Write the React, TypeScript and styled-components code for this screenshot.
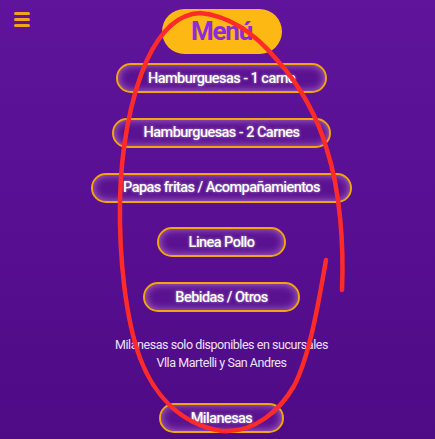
import styled, { createGlobalStyle } from 'styled-components';

const items = [
  'Hamburguesas - 1 carne',
  'Hamburguesas - 2 Carnes',
  'Papas fritas / Acompañamientos',
  'Linea Pollo',
  'Bebidas / Otros',
];

const GlobalStyle = createGlobalStyle`
  html, body {
    margin: 0;
    padding: 0;
  }

  body {
    width: 435px;
    height: 439px;
    overflow: hidden;
    background: linear-gradient(180deg, #5f149b 0%, #580f92 50%, #4e0b85 100%);
    font-family: Roboto, 'Liberation Sans', sans-serif;
  }
`;

const Page = styled.main`
  position: relative;
  height: 439px;
  padding: 9px 0 0 8px;
  box-sizing: border-box;
  display: flex;
  flex-direction: column;
  align-items: center;
`;

const Header = styled.header`
  width: 100%;
  display: grid;
  grid-template-columns: 1fr auto 1fr;
  align-items: start;
`;

const Burger = styled.button`
  justify-self: start;
  margin: 3px 0 0 6px;
  padding: 0;
  width: 16px;
  border: 0;
  background: none;
  display: flex;
  flex-direction: column;
  gap: 3.5px;
  cursor: pointer;

  span {
    display: block;
    height: 2.5px;
    border-radius: 2px;
    background: #f5a31e;
  }
`;

const Title = styled.h1`
  margin: 0;
  width: 120px;
  height: 45px;
  border-radius: 23px;
  background: #fdb813;
  color: #8d2ad9;
  font-size: 26px;
  font-weight: 700;
  letter-spacing: -1.2px;
  display: flex;
  align-items: center;
  justify-content: center;
  line-height: 1;
  padding-bottom: 2px;
  box-sizing: border-box;
`;

const List = styled.nav`
  margin-top: 9px;
  display: flex;
  flex-direction: column;
  align-items: center;
  gap: 24.75px;
`;

const MenuButton = styled.button`
  height: 30px;
  padding: 0 30px;
  border: 2px solid #f2a60c;
  border-radius: 15px;
  background: #5a1291;
  box-shadow: inset 0 0 9px rgba(235, 175, 235, 0.6);
  color: #fff;
  font-family: inherit;
  font-size: 14.5px;
  font-weight: 500;
  letter-spacing: -0.55px;
  text-shadow: 0 0 3px rgba(255, 255, 255, 0.55);
  white-space: nowrap;
  cursor: pointer;
`;

const Note = styled.p`
  margin: 24px 0 31px;
  color: #ece2f4;
  font-size: 12.5px;
  letter-spacing: -0.45px;
  line-height: 18px;
  text-align: center;
`;

const Scribble = styled.svg`
  position: absolute;
  left: 0;
  top: 0;
  pointer-events: none;
`;

export default function App() {
  return (
    <>
      <GlobalStyle />
      <Page>
        <Header>
          <Burger aria-label="menu">
            <span />
            <span />
            <span />
          </Burger>
          <Title>Menú</Title>
          <div />
        </Header>
        <List>
          {items.map((label) => (
            <MenuButton key={label}>{label}</MenuButton>
          ))}
        </List>
        <Note>
          Milanesas solo disponibles en sucursales
          <br />
          Vlla Martelli y San Andres
        </Note>
        <MenuButton>Milanesas</MenuButton>
        <Scribble width="435" height="439" viewBox="0 0 435 439">
          <path
            d="M342,290 C344,245 340,190 327,150 C318,118 300,85 277,60 C258,37 232,16 200,13 C178,14 160,32 147,60 C130,98 121,150 120,200 C119,260 126,320 140,358 C154,395 180,424 222,431 C255,433 280,410 294,386 C310,355 319,300 326,260"
            fill="none"
            stroke="#ff2b2b"
            strokeWidth="4.5"
            strokeLinecap="round"
          />
        </Scribble>
      </Page>
    </>
  );
}
